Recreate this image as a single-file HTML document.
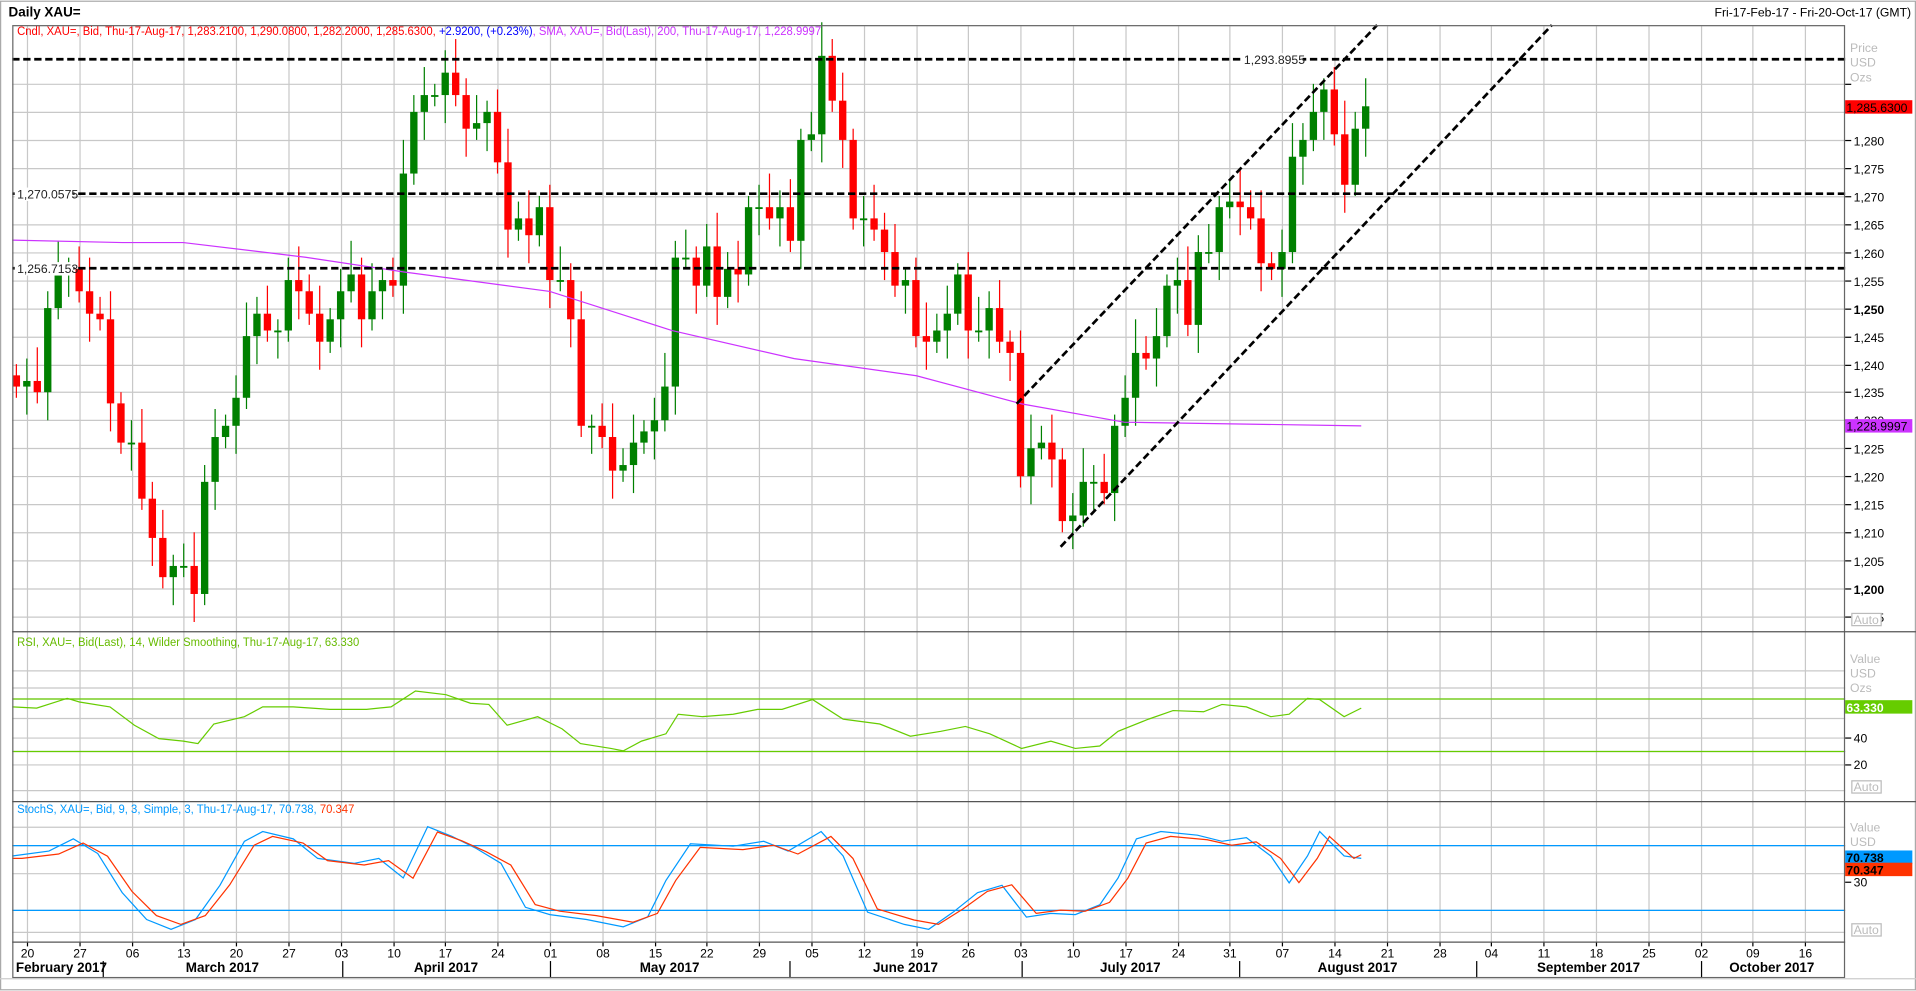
<!DOCTYPE html>
<html><head><meta charset="utf-8"><style>
html,body{margin:0;padding:0;background:#fff;overflow:hidden}
svg{display:block}
text{font-family:"Liberation Sans",sans-serif}
</style></head><body>
<svg id="s" width="1916" height="991" viewBox="0 0 1568 810" xmlns="http://www.w3.org/2000/svg">
<rect x="0" y="0" width="1568" height="810" fill="#fff"/>
<rect x="0.5" y="0.5" width="1567" height="809" fill="none" stroke="#aaa"/>
<text x="7" y="13" font-size="11" font-weight="bold" fill="#000">Daily XAU=</text>
<text x="1564" y="13" font-size="10" fill="#000" text-anchor="end">Fri-17-Feb-17 - Fri-20-Oct-17 (GMT)</text>
<g id="grid"></g>
<g id="content"></g>
<rect x="10.5" y="20.5" width="1499" height="779" fill="none" stroke="#666"/>
<line x1="10" y1="516.5" x2="1568" y2="516.5" stroke="#555"/>
<line x1="10" y1="655.5" x2="1568" y2="655.5" stroke="#555"/>
<line x1="10" y1="770.5" x2="1510" y2="770.5" stroke="#555"/>
<line x1="0" y1="800.5" x2="1568" y2="800.5" stroke="#ccc"/>
</svg>
<script>
const S=document.getElementById('s'),G=document.getElementById('grid'),C=document.getElementById('content');
const NS='http://www.w3.org/2000/svg';
function el(p,t,a,txt){const e=document.createElementNS(NS,t);for(const k in a)e.setAttribute(k,a[k]);if(txt!==undefined)e.textContent=txt;p.appendChild(e);return e;}
const yp=p=>114+(1280-p)*4.5875;
for(let p=1195;p<=1290;p+=5){const y=Math.round(yp(p))+.5;if(y<22)continue;el(G,'line',{x1:10,y1:y,x2:1510,y2:y,stroke:'#c8c8c8'});
 el(G,'line',{x1:1510,y1:y,x2:1515,y2:y,stroke:'#000'});
 if(p<=1280) el(G,'text',{x:1517,y:y+4,'font-size':10,fill:'#000','font-weight':(p%50==0)?'bold':'normal'},(p/1000|0)+','+String(p%1000).padStart(3,'0'));}
[548,562,571,587,603,614,625,646].forEach(y=>el(G,'line',{x1:10,y1:y+.5,x2:1510,y2:y+.5,stroke:'#c8c8c8'}));
[[603,'40'],[625,'20']].forEach(a=>{el(G,'line',{x1:1510,y1:a[0]+.5,x2:1515,y2:a[0]+.5,stroke:'#000'});el(G,'text',{x:1517,y:a[0]+4,'font-size':10},a[1]);});
[676,691,714,744,762].forEach(y=>el(G,'line',{x1:10,y1:y+.5,x2:1510,y2:y+.5,stroke:'#c8c8c8'}));
el(G,'line',{x1:1510,y1:721.5,x2:1515,y2:721.5,stroke:'#000'});el(G,'text',{x:1517,y:725,'font-size':10},'30');
const ticks=['20','27','06','13','20','27','03','10','17','24','01','08','15','22','29','05','12','19','26','03','10','17','24','31','07','14','21','28','04','11','18','25','02','09','16'];
ticks.forEach((t,i)=>{const x=Math.round(22+i*42.8)+.5;el(G,'line',{x1:x,y1:21,x2:x,y2:770,stroke:'#c8c8c8'});el(G,'line',{x1:x,y1:770,x2:x,y2:774,stroke:'#000'});el(G,'text',{x:x,y:783,'font-size':10,'text-anchor':'middle'},t);});
const seps=[84,280,450,646,836,1014,1208,1392];
seps.forEach(x=>el(G,'line',{x1:x+.5,y1:786,x2:x+.5,y2:800,stroke:'#000'}));
[[13,'February 2017','start'],[182,'March 2017','middle'],[365,'April 2017','middle'],[548,'May 2017','middle'],[741,'June 2017','middle'],[925,'July 2017','middle'],[1111,'August 2017','middle'],[1300,'September 2017','middle'],[1450,'October 2017','middle']].forEach(a=>el(G,'text',{x:a[0],y:795,'font-size':11,'font-weight':'bold','text-anchor':a[2]},a[1]));
[['Price',42],['USD',54],['Ozs',66],['Value',542],['USD',554],['Ozs',566],['Value',680],['USD',692]].forEach(a=>el(G,'text',{x:1514,y:a[1],'font-size':10,fill:'#bbb'},a[0]));
[[510],[647],[764]].forEach(a=>{el(G,'rect',{x:1515.5,y:a[0]-8.5,width:24,height:10,fill:'#fff',stroke:'#bbb'});el(G,'text',{x:1517,y:a[0],'font-size':10,fill:'#bbb'},'Auto');});
const closes=[1236,1237,1235,1250,1257,1257,1253,1249,1248,1233,1226,1226,1216,1209,1202,1204,1204,1199,1219,1227,1229,1234,1245,1249,1246,1246,1255,1253,1249,1244,1248,1253,1256,1248,1253,1255,1254,1274,1285,1288,1288,1292,1288,1282,1283,1285,1276,1264,1266,1263,1268,1255,1255,1248,1229,1229,1227,1221,1222,1226,1228,1230,1236,1259,1259,1254,1261,1252,1257,1256,1268,1268,1266,1268,1262,1280,1281,1295,1287,1280,1266,1266,1264,1260,1254,1255,1245,1244,1246,1249,1256,1246,1246,1250,1244,1242,1220,1225,1226,1223,1212,1213,1219,1219,1217,1229,1234,1242,1241,1245,1254,1255,1247,1260,1260,1268,1269,1268,1266,1258,1257,1260,1277,1280,1285,1289,1281,1272,1282,1286];
let prev=1238;
closes.forEach((c,i)=>{const x=13.4+i*8.56;const o=prev;const up=c>=o;const col=up?'#008000':'#ff0000';
 const h=Math.max(o,c)+2+((i*7)%5),l=Math.min(o,c)-2-((i*3)%6);
 el(C,'line',{x1:x,y1:yp(h),x2:x,y2:yp(l),stroke:col,'stroke-width':1});
 const t=yp(Math.max(o,c)),b=yp(Math.min(o,c));el(C,'rect',{x:x-3,y:t,width:6,height:Math.max(1.5,b-t),fill:col});prev=c;});
el(C,'polyline',{points:'10,196 100,198 150,198 250,210 330,222 450,238 550,270 650,293 750,307 836,330 920,345 1114,348',fill:'none',stroke:'#cc33ff','stroke-width':1});
[48,158,219].forEach(y=>el(C,'line',{x1:10,y1:y,x2:1510,y2:y,stroke:'#000','stroke-width':2.2,'stroke-dasharray':'6,3'}));
el(C,'rect',{x:1016,y:43,width:50,height:11,fill:'#fff'});
el(C,'text',{x:1018,y:52,'font-size':10,fill:'#222'},'1,293.8955');
el(C,'rect',{x:12,y:153,width:48,height:11,fill:'#fff'});el(C,'text',{x:14,y:162,'font-size':10,fill:'#222'},'1,270.0575');
el(C,'rect',{x:12,y:214,width:48,height:11,fill:'#fff'});el(C,'text',{x:14,y:223,'font-size':10,fill:'#222'},'1,256.7153');
el(C,'line',{x1:832,y1:330,x2:1127,y2:20,stroke:'#000','stroke-width':2.2,'stroke-dasharray':'6,3'});
el(C,'line',{x1:868,y1:447,x2:1270,y2:20,stroke:'#000','stroke-width':2.2,'stroke-dasharray':'6,3'});
const lg=el(C,'text',{x:14,y:28,'font-size':10,textLength:658,lengthAdjust:'spacingAndGlyphs'});
[['Cndl, XAU=, Bid, Thu-17-Aug-17, 1,283.2100, 1,290.0800, 1,282.2000, 1,285.6300, ','#ff0000'],['+2.9200, (+0.23%)','#0000ff'],[', SMA, XAU=, Bid(Last),  200, Thu-17-Aug-17, 1,228.9997','#cc33ff']].forEach(a=>el(lg,'tspan',{fill:a[1]},a[0]));
el(C,'text',{x:14,y:528,'font-size':10,fill:'#66bb00',textLength:280,lengthAdjust:'spacingAndGlyphs'},'RSI, XAU=, Bid(Last),  14, Wilder Smoothing, Thu-17-Aug-17, 63.330');
const sl=el(C,'text',{x:14,y:665,'font-size':10,textLength:276,lengthAdjust:'spacingAndGlyphs'});el(sl,'tspan',{fill:'#0099ff'},'StochS, XAU=, Bid,  9,  3, Simple,  3, Thu-17-Aug-17, 70.738, ');el(sl,'tspan',{fill:'#ff3300'},'70.347');
el(C,'line',{x1:10,y1:571.5,x2:1510,y2:571.5,stroke:'#66cc00'});el(C,'line',{x1:10,y1:614.5,x2:1510,y2:614.5,stroke:'#66cc00'});
el(C,'polyline',{points:'10,578 30,579 55,571 65,574 90,578 110,593 130,604 150,606 162,608 175,592 200,586 215,578 240,578 270,580 300,580 320,578 340,565 365,568 385,575 400,576 415,593 440,586 460,596 475,608 500,612 510,614 525,606 545,600 555,584 575,586 600,584 620,580 640,580 665,572 690,588 720,592 745,602 770,598 790,594 810,600 836,612 860,606 880,612 900,610 915,598 940,588 960,581 985,582 1000,576 1020,578 1040,586 1055,584 1070,571 1080,572 1100,586 1114,579',fill:'none',stroke:'#66cc00'});
el(C,'line',{x1:10,y1:691.5,x2:1510,y2:691.5,stroke:'#0099ff'});el(C,'line',{x1:10,y1:744.5,x2:1510,y2:744.5,stroke:'#0099ff'});
const bl='10,700 40,696 60,686 80,698 100,730 120,752 140,760 160,752 180,724 200,688 215,680 240,686 260,702 290,706 310,702 330,718 350,676 370,684 390,694 410,706 430,742 450,748 480,752 510,758 530,750 545,720 565,690 600,692 625,688 645,696 672,680 690,700 710,746 740,756 760,760 780,746 800,730 820,724 840,750 860,747 880,748 900,740 915,718 930,686 950,680 980,683 1000,688 1020,685 1040,700 1055,722 1070,700 1080,680 1100,700 1114,702';
el(C,'polyline',{points:bl,fill:'none',stroke:'#0099ff'});
const rd=bl.split(' ').map(p=>{const [x,y]=p.split(',').map(Number);return (x+8)+','+(y*0.9+72)}).slice(0,-1);
rd.push('1114,699');
el(C,'polyline',{points:'10,702 '+rd.join(' '),fill:'none',stroke:'#ff3300'});
[[87,'1,285.6300','#ff0000','#000'],[348,'1,228.9997','#cc33ff','#000'],[578,'63.330','#66cc00','#fff'],[701,'70.738','#0099ff','#000'],[711,'70.347','#ff3300','#000']].forEach(a=>{el(C,'rect',{x:1510,y:a[0]-5.5,width:55,height:11,fill:a[2]});el(C,'text',{x:1511,y:a[0]+4,'font-size':10,fill:a[3],'font-weight':a[1].length<8?'bold':'normal'},a[1]);});
</script>
</body></html>
